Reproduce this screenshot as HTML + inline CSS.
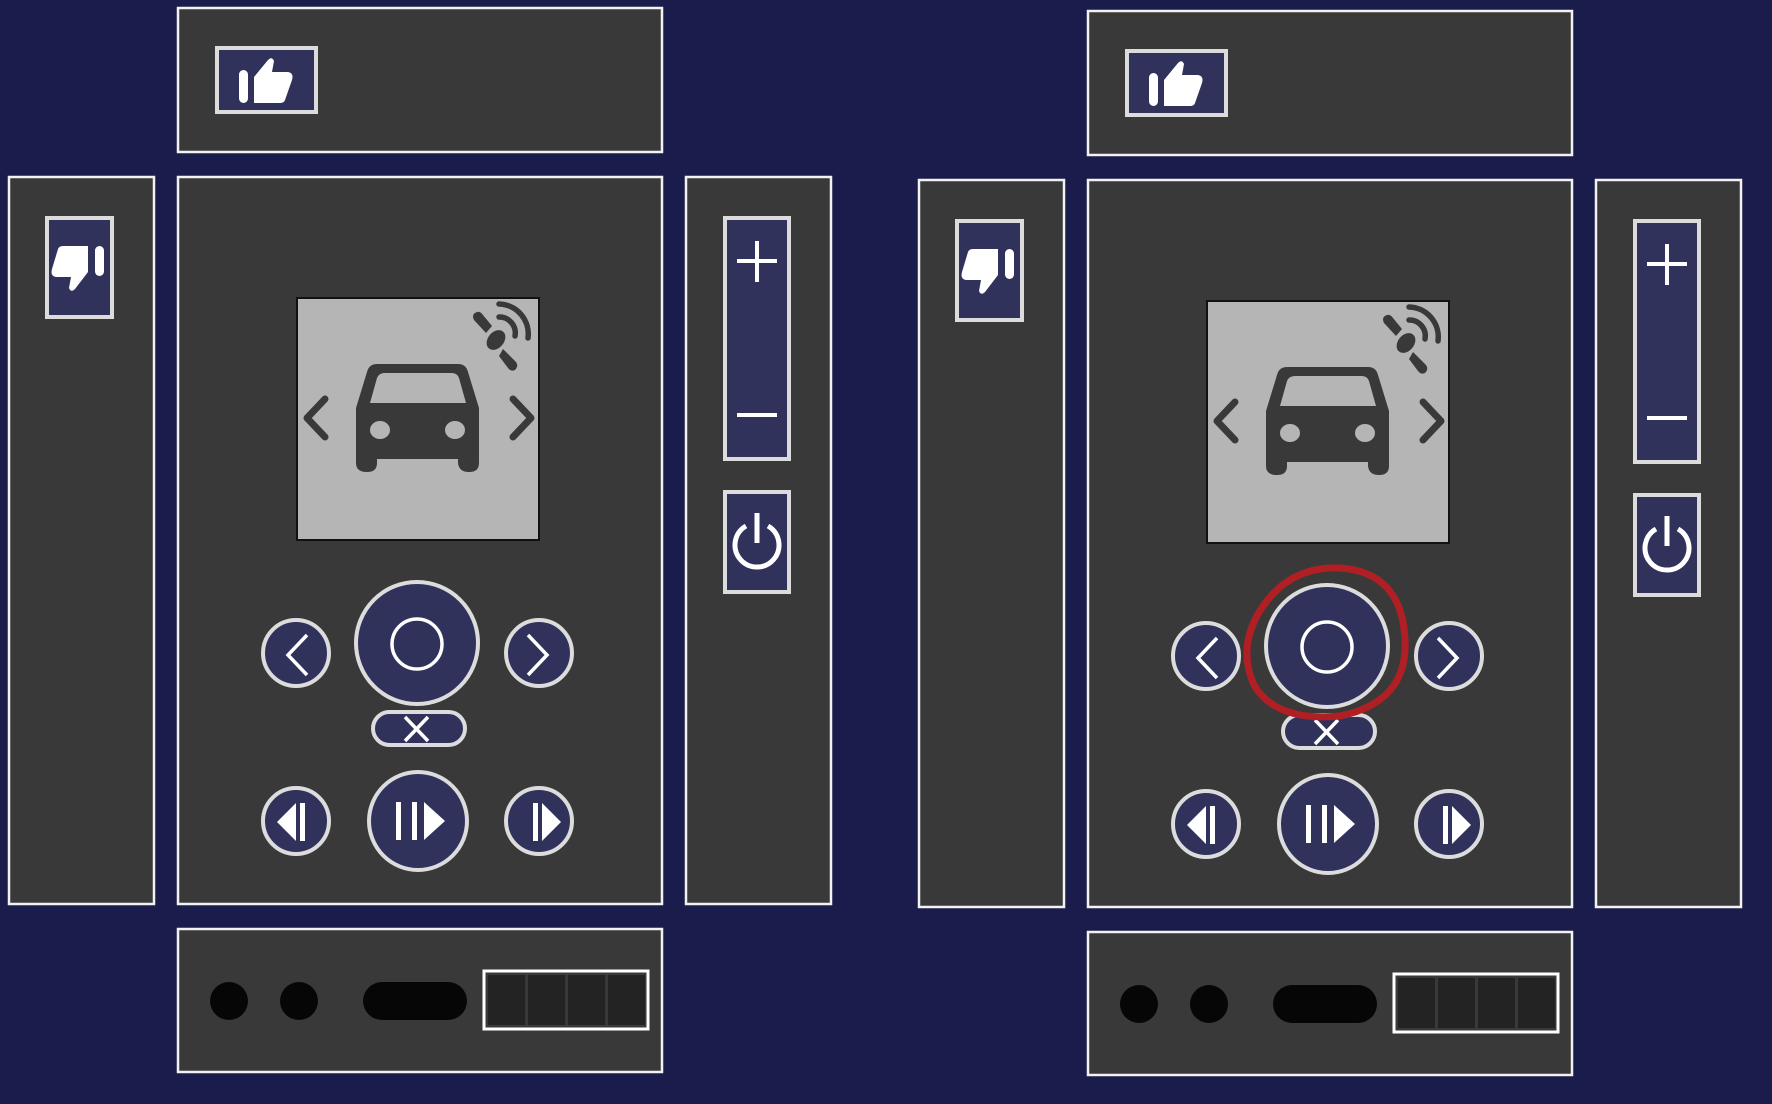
<!DOCTYPE html>
<html><head><meta charset="utf-8"><style>
html,body{margin:0;padding:0;background:#1a1d4b;}
svg{display:block;}
</style></head><body>
<svg width="1772" height="1104" viewBox="0 0 1772 1104" xmlns="http://www.w3.org/2000/svg">
<rect width="1772" height="1104" fill="#1a1d4b"/>
<defs>
<g id="set">
  <g fill="#393939" stroke="#f2f2f2" stroke-width="2.5">
    <rect x="178" y="8" width="484" height="144"/>
    <rect x="9" y="177" width="145" height="727"/>
    <rect x="178" y="177" width="484" height="727"/>
    <rect x="686" y="177" width="145" height="727"/>
    <rect x="178" y="929" width="484" height="143"/>
  </g>
  <g fill="#31325c" stroke="#dcdcdc" stroke-width="4">
    <rect x="217" y="48" width="99" height="64"/>
    <rect x="47" y="218" width="65" height="99"/>
    <rect x="725" y="218" width="64" height="241"/>
    <rect x="725" y="492" width="64" height="100"/>
  </g>
  <g fill="#fff">
    <rect x="239" y="70" width="9" height="33" rx="4.5"/>
    <path d="M254 103 L254 77 L268 60 Q272 56 274 61 L272 72 L288 72 Q294 73 292 80 L285 100 Q284 103 280 103 Z"/>
  </g>
  <g fill="#fff">
    <rect x="95" y="246" width="9" height="30" rx="4.5"/>
    <path d="M88 246 L88 272 L75 289 Q71 293 69 288 L71 277 L56 277 Q50 276 52 269 L58 249 Q59 246 63 246 Z"/>
  </g>
  <g stroke="#fff" stroke-width="4">
    <line x1="737" y1="261" x2="777" y2="261"/>
    <line x1="757" y1="241" x2="757" y2="282"/>
    <line x1="737" y1="415" x2="777" y2="415"/>
  </g>
  <g stroke="#fff" stroke-width="5" fill="none">
    <line x1="757" y1="513" x2="757" y2="543"/>
    <path d="M746 526 A22 22 0 1 0 768 526"/>
  </g>
  <rect x="297" y="298" width="242" height="242" fill="#b5b5b5" stroke="#111" stroke-width="2"/>
  <path d="M356 408 L367 372 Q369 364 377 364 L458 364 Q466 364 468 372 L479 408 L479 463 Q479 472 469 472 Q459 472 458 463 L458 459 L377 459 L377 463 Q377 472 367 472 Q356 472 356 463 Z" fill="#393939"/>
  <path d="M370 403 L377 378 Q379 373 385 373 L452 373 Q457 373 459 378 L466 403 Z" fill="#b5b5b5"/>
  <ellipse cx="380" cy="430" rx="10" ry="9" fill="#b5b5b5"/>
  <ellipse cx="455" cy="430" rx="10" ry="9" fill="#b5b5b5"/>
  <g stroke="#393939" stroke-width="7" fill="none" stroke-linecap="round" stroke-linejoin="round">
    <polyline points="325,399 307,418 325,437"/>
    <polyline points="513,399 531,418 513,437"/>
  </g>
  <g transform="translate(0,-68)">
    <g fill="#393939">
      <path d="M474 388 Q471 382 477 380 Q480 379 483 383 L492 394 L486 401 Z"/>
      <ellipse cx="496" cy="408" rx="8" ry="11" transform="rotate(40 496 408)"/>
      <path d="M503 417 L516 430 Q519 434 515 438 Q511 440 508 436 L499 424 Z"/>
    </g>
    <g stroke="#393939" stroke-width="5.5" fill="none" stroke-linecap="round">
      <path d="M499 385 A16 16 0 0 1 515 404"/>
      <path d="M499 372 A30 30 0 0 1 528 406"/>
    </g>
  </g>
  <g fill="#31325c" stroke="#dcdcdc" stroke-width="4">
    <circle cx="417" cy="643" r="61"/>
    <circle cx="296" cy="653" r="33"/>
    <circle cx="539" cy="653" r="33"/>
    <rect x="373" y="712" width="92" height="33" rx="16.5"/>
    <circle cx="296" cy="821" r="33"/>
    <circle cx="418" cy="821" r="49"/>
    <circle cx="539" cy="821" r="33"/>
  </g>
  <g stroke="#fff" stroke-width="3.5" fill="none">
    <circle cx="417" cy="644" r="25"/>
    <polyline points="307,635 288,655 307,675"/>
    <polyline points="528,635 547,655 528,675"/>
    <line x1="405" y1="717" x2="428" y2="741"/>
    <line x1="428" y1="717" x2="405" y2="741"/>
  </g>
  <g fill="#fff">
    <polygon points="277,822 296,803 296,841"/>
    <rect x="300" y="803" width="5" height="38"/>
    <rect x="533" y="803" width="5" height="38"/>
    <polygon points="542,803 561,822 542,841"/>
    <rect x="396" y="802" width="5" height="38"/>
    <rect x="412" y="802" width="5" height="38"/>
    <polygon points="424,802 445,821 424,840"/>
  </g>
  <g fill="#050605">
    <circle cx="229" cy="1001" r="19"/>
    <circle cx="299" cy="1001" r="19"/>
    <rect x="363" y="982" width="104" height="38" rx="19"/>
  </g>
  <rect x="484" y="971" width="164" height="58" fill="#393939" stroke="#fff" stroke-width="3"/>
  <g fill="#232323">
    <rect x="488" y="975" width="37" height="50"/>
    <rect x="528" y="975" width="37" height="50"/>
    <rect x="568" y="975" width="37" height="50"/>
    <rect x="608" y="975" width="37" height="50"/>
  </g>
</g>
</defs>
<use href="#set"/>
<use href="#set" transform="translate(910,3)"/>
<path d="M1258 614 Q1286 566 1340 568 Q1402 572 1405 640 Q1408 702 1340 716 Q1276 722 1254 685 Q1238 650 1258 614 Z" fill="none" stroke="#b01f24" stroke-width="7"/>
</svg>
</body></html>
